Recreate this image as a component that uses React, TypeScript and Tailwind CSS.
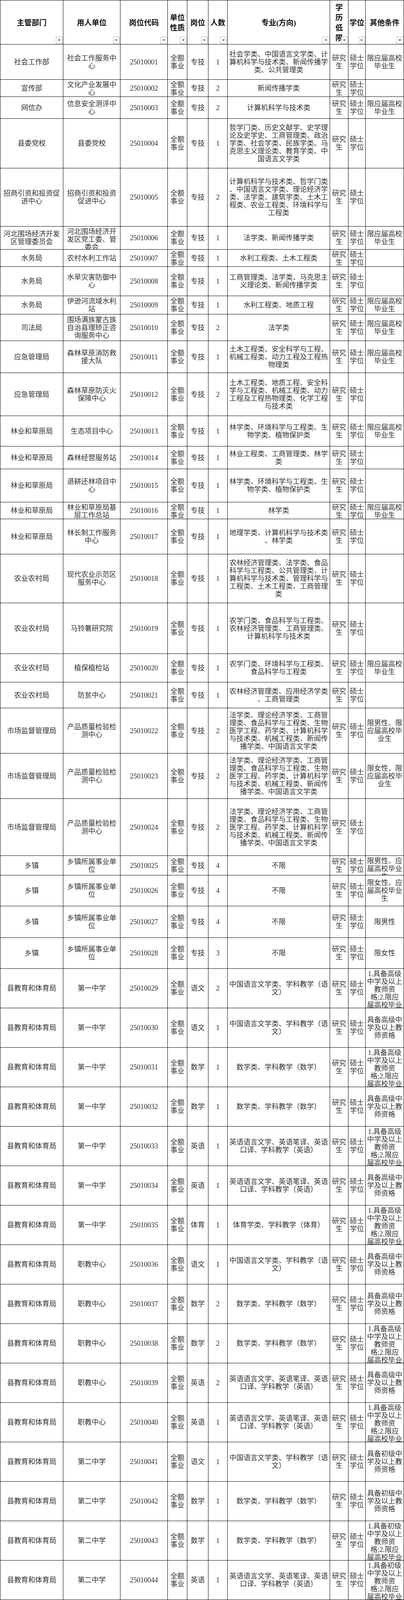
import React from "react";

type Row = {
  h: number;
  dept: string;
  unit: string;
  code: string;
  type: string;
  num: string;
  major: string;
  other: string;
};

const W = [
  "w-[161px]",
  "w-[146px]",
  "w-[121px]",
  "w-[50px]",
  "w-[54px]",
  "w-[49px]",
  "w-[262px]",
  "w-[47px]",
  "w-[44px]",
  "w-[98px]",
];

const GRAD = "限应届高校\n毕业生";
const A = "1.具备高级\n中学及以上\n教师资\n格;2.限应\n届高校毕业\n生";
const B = "具备高级中\n学及以上教\n师资格";
const A2 = "1.具备初级\n中学及以上\n教师资\n格;2.限应\n届高校毕业\n生";
const B2 = "具备初级中\n学及以上教\n师资格";
const A3 = "1.具备小学\n及以上教师\n资格;2.限\n应届高校毕\n业生";
const B3 = "具备小学及\n以上教师资\n格";

const M_YW = "中国语言文学类、学科教学（语\n文）";
const M_SX = "数学类、学科教学（数学）";
const M_YY = "英语语言文学、英语笔译、英语\n口译、学科教学（英语）";
const M_TY = "体育学类、学科教学（体育）";
const M_LS = "考古学、中国史、世界史类、学\n科教学（历史）";
const M_XX = "计算机科学与技术类、学科教学\n（信息技术）";
const M_SW = "生物学类、学科教学（生物）";
const M_ZZ = "政治学类、马克思主义理论类、\n学科教学（政治）";
const M_DL = "地理学类、学科教学（地理）";

const SCMJ =
  "法学类、理论经济学类、工商管\n理类、食品科学与工程类、生物\n医学工程、药学类、计算机科学\n与技术类、机械工程类、新闻传\n播学类、中国语言文学类";

const JY = "县教育和体育局";

const rows: Row[] = [
  { h: 90, dept: "社会工作部", unit: "社会工作服务中\n心", code: "25010001", type: "专技", num: "1", major: "社会学类、中国语言文学类、计\n算机科学与技术类、新闻传播学\n类、公共管理类", other: GRAD },
  { h: 44, dept: "宣传部", unit: "文化产业发展中\n心", code: "25010002", type: "专技", num: "2", major: "新闻传播学类", other: "" },
  { h: 56, dept: "网信办", unit: "信息安全测评中\n心", code: "25010003", type: "专技", num: "2", major: "计算机科学与技术类", other: GRAD },
  { h: 127, dept: "县委党校", unit: "县委党校", code: "25010004", type: "专技", num: "1", major: "哲学门类、历史文献学、史学理\n论及史学史、工商管理类、政治\n学类、社会学类、民族学类、马\n克思主义理论类、教育学类、中\n国语言文学类", other: "" },
  { h: 149, dept: "招商引资和投资促\n进中心", unit: "招商引资和投资\n促进中心", code: "25010005", type: "专技", num: "2", major: "计算机科学与技术类、哲学门类\n、中国语言文学类、理论经济学\n类、法学类、建筑学类、土木工\n程类、农业工程类、环境科学与\n工程类", other: "" },
  { h: 59, dept: "河北围场经济开发\n区管理委员会", unit: "河北围场经济开\n发区党工委、管\n委会", code: "25010006", type: "专技", num: "1", major: "法学类、新闻传播学类", other: GRAD },
  { h: 44, dept: "水务局", unit: "农村水利工作站", code: "25010007", type: "专技", num: "1", major: "水利工程类、土木工程类", other: "" },
  { h: 75, dept: "水务局", unit: "水旱灾害防御中\n心", code: "25010008", type: "专技", num: "1", major: "工商管理类、法学类、马克思主\n义理论类、新闻传播学类", other: "" },
  { h: 47, dept: "水务局", unit: "伊逊河流域水利\n站", code: "25010009", type: "专技", num: "1", major: "水利工程类、地质工程", other: GRAD },
  { h: 68, dept: "司法局", unit: "围场满族蒙古族\n自治县理矫正咨\n询服务中心", code: "25010010", type: "专技", num: "2", major: "法学类", other: GRAD },
  { h: 82, dept: "应急管理局", unit: "森林草原消防救\n援大队", code: "25010011", type: "专技", num: "1", major: "土木工程类、安全科学与工程、\n机械工程类、动力工程及工程热\n物理类", other: GRAD },
  { h: 110, dept: "应急管理局", unit: "森林草原防灭火\n保障中心", code: "25010012", type: "专技", num: "2", major: "土木工程类、地质工程、安全科\n学与工程类、机械工程类、动力\n工程及工程热物理类、化学工程\n与技术类", other: "" },
  { h: 78, dept: "林业和草原局", unit: "生态项目中心", code: "25010013", type: "专技", num: "1", major: "林学类、环境科学与工程类、生\n物学类、植物保护类", other: GRAD },
  { h: 58, dept: "林业和草原局", unit: "森林经营服务站", code: "25010014", type: "专技", num: "1", major: "林业工程类、工商管理类、林学\n类", other: "" },
  { h: 85, dept: "林业和草原局", unit: "退耕还林项目中\n心", code: "25010015", type: "专技", num: "1", major: "林学类、环境科学与工程类、生\n物学类、植物保护类", other: "" },
  { h: 43, dept: "林业和草原局", unit: "林业和草原局基\n层工作总站", code: "25010016", type: "专技", num: "1", major: "林学类", other: GRAD },
  { h: 90, dept: "林业和草原局", unit: "林长制工作服务\n中心", code: "25010017", type: "专技", num: "1", major: "地理学类、计算机科学与技术类\n、林学类", other: "" },
  { h: 125, dept: "农业农村局", unit: "现代农业示范区\n服务中心", code: "25010018", type: "专技", num: "1", major: "农林经济管理类、法学类、食品\n科学与工程类、公共管理类、计\n算机科学与技术类、管理科学与\n工程类、土木工程类、工商管理\n类", other: "" },
  { h: 130, dept: "农业农村局", unit: "马铃薯研究院", code: "25010019", type: "专技", num: "1", major: "农学门类、食品科学与工程类、\n农林经济管理类、工商管理类、\n计算机科学与技术类", other: "" },
  { h: 73, dept: "农业农村局", unit: "植保植检站", code: "25010020", type: "专技", num: "1", major: "农学门类、环境科学与工程类、\n食品科学与工程类", other: GRAD },
  { h: 66, dept: "农业农村局", unit: "防贫中心", code: "25010021", type: "专技", num: "1", major: "农林经济管理类、应用经济学类\n、工商管理类", other: "" },
  { h: 116, dept: "市场监督管理局", unit: "产品质量检验检\n测中心", code: "25010022", type: "专技", num: "2", major: SCMJ, other: "限男性、限\n应届高校毕\n业生" },
  { h: 116, dept: "市场监督管理局", unit: "产品质量检验检\n测中心", code: "25010023", type: "专技", num: "2", major: SCMJ, other: "限女性、限\n应届高校毕\n业生" },
  { h: 146, dept: "市场监督管理局", unit: "产品质量检验检\n测中心", code: "25010024", type: "专技", num: "2", major: SCMJ, other: "" },
  { h: 50, dept: "乡镇", unit: "乡镇所属事业单\n位", code: "25010025", type: "专技", num: "4", major: "不限", other: "限男性、应\n届高校毕业\n生" },
  { h: 79, dept: "乡镇", unit: "乡镇所属事业单\n位", code: "25010026", type: "专技", num: "4", major: "不限", other: "限女性、应\n届高校毕业\n生" },
  { h: 81, dept: "乡镇", unit: "乡镇所属事业单\n位", code: "25010027", type: "专技", num: "4", major: "不限", other: "限男性" },
  { h: 79, dept: "乡镇", unit: "乡镇所属事业单\n位", code: "25010028", type: "专技", num: "3", major: "不限", other: "限女性" },
];

const teach: [string, string, string, string, string, string][] = [
  ["第一中学", "25010029", "语文", "2", M_YW, A],
  ["第一中学", "25010030", "语文", "1", M_YW, B],
  ["第一中学", "25010031", "数学", "1", M_SX, A],
  ["第一中学", "25010032", "数学", "1", M_SX, B],
  ["第一中学", "25010033", "英语", "1", M_YY, A],
  ["第一中学", "25010034", "英语", "1", M_YY, B],
  ["第一中学", "25010035", "体育", "1", M_TY, A],
  ["职教中心", "25010036", "语文", "1", M_YW, B],
  ["职教中心", "25010037", "数学", "2", M_SX, B],
  ["职教中心", "25010038", "数学", "2", M_SX, A],
  ["职教中心", "25010039", "英语", "2", M_YY, B],
  ["职教中心", "25010040", "英语", "1", M_YY, A],
  ["第二中学", "25010041", "语文", "1", M_YW, B2],
  ["第二中学", "25010042", "数学", "1", M_SX, B2],
  ["第二中学", "25010043", "数学", "1", M_SX, A2],
  ["第二中学", "25010044", "英语", "1", M_YY, A2],
  ["第二中学", "25010045", "历史", "1", M_LS, B2],
  ["第二中学", "25010046", "历史", "1", M_LS, A2],
  ["第二中学", "25010047", "体育", "2", M_TY, A2],
  ["第二中学", "25010048", "体育", "1", M_TY, B2],
  ["第二中学", "25010049", "信息\n技术", "1", M_XX, B2],
  ["围场镇中学", "25010050", "语文", "1", M_YW, B2],
  ["围场镇中学", "25010051", "语文", "1", M_YW, A2],
  ["围场镇中学", "25010052", "英语", "1", M_YY, B2],
  ["围场镇中学", "25010053", "英语", "1", M_YY, A2],
  ["围场镇中学", "25010054", "生物", "1", M_SW, B2],
  ["围场镇中学", "25010055", "政治", "1", M_ZZ, A2],
  ["围场镇中学", "25010056", "历史", "1", M_LS, B2],
  ["围场镇中学", "25010057", "地理", "1", M_DL, A2],
  ["第一小学", "25010058", "语文", "1", M_YW, A3],
  ["第二小学", "25010059", "语文", "1", M_YW, A3],
  ["第二小学", "25010060", "体育", "1", M_TY, B3],
  ["第四小学", "25010061", "语文", "1", M_YW, A3],
  ["第四小学", "25010062", "体育", "1", M_TY, B3],
  ["逸夫小学", "25010063", "语文", "1", M_YW, A3],
  ["逸夫小学", "25010064", "数学", "1", M_SX, B3],
  ["逸夫小学", "25010065", "体育", "1", M_TY, B3],
  ["第六小学", "25010066", "数学", "1", M_SX, A3],
  ["回民小学", "25010067", "语文", "1", M_YW, B3],
  ["回民小学", "25010068", "体育", "1", M_TY, A3],
];

for (const t of teach) {
  rows.push({ h: 101, dept: JY, unit: t[0], code: t[1], type: t[2], num: t[3], major: t[4], other: t[5] });
}
rows.push({ h: 101, dept: "卫生健康局", unit: "县妇幼保健计划\n生育服务中心", code: "25010069", type: "医生", num: "2", major: "临床医学类、医学技术", other: GRAD });
rows.push({ h: 101, dept: "卫生健康局", unit: "县妇幼保健计划\n生育服务中心", code: "25010070", type: "医生", num: "2", major: "临床医学类、医学技术", other: "" });

const headers = ["主管部门", "用人单位", "岗位代码", "单位\n性质", "岗位", "人数", "专业(方向)", "学\n历\n低\n限", "学位", "其他条件"];

function FilterButton() {
  return (
    <div className="absolute right-[1px] bottom-[1px] w-[17px] h-[18px] bg-[#fbfbfb] border border-[#b4b4b4] flex items-center justify-center">
      <svg width="7" height="4" viewBox="0 0 7 4">
        <polygon points="0,0 7,0 3.5,4" fill="#1f7a3c" />
      </svg>
    </div>
  );
}

function Cell({ w, text }: { w: string; text: string }) {
  return (
    <div className={`${w} shrink-0 h-full min-h-0 border-r border-black flex flex-col overflow-hidden px-[3px] py-[3px]`}>
      <div className="my-auto whitespace-pre text-center leading-[20px]">{text}</div>
    </div>
  );
}

export default function App() {
  return (
    <div className="w-[1033px] bg-white text-[#333] text-[18px] font-['Liberation_Serif','Noto_Sans_CJK_SC',serif]">
      <div className="w-[1033px] border-l border-t border-black">
        <div className="flex h-[113px] border-b border-black overflow-hidden">
          {headers.map((t, i) => (
            <div key={i} className={`${W[i]} shrink-0 relative border-r border-black flex items-center justify-center px-[2px] pt-[4px]`}>
              <div className="whitespace-pre text-center text-[19px] leading-[26px] font-bold text-[#111]">{t}</div>
              <FilterButton />
            </div>
          ))}
        </div>
        {rows.map((r) => (
          <div key={r.code} className="flex border-b border-black overflow-hidden" style={{ height: r.h }}>
            <Cell w={W[0]} text={r.dept} />
            <Cell w={W[1]} text={r.unit} />
            <Cell w={W[2]} text={r.code} />
            <Cell w={W[3]} text={"全额\n事业"} />
            <Cell w={W[4]} text={r.type} />
            <Cell w={W[5]} text={r.num} />
            <Cell w={W[6]} text={r.major} />
            <Cell w={W[7]} text={"研究\n生"} />
            <Cell w={W[8]} text={"硕士\n学位"} />
            <Cell w={W[9]} text={r.other} />
          </div>
        ))}
      </div>
    </div>
  );
}
